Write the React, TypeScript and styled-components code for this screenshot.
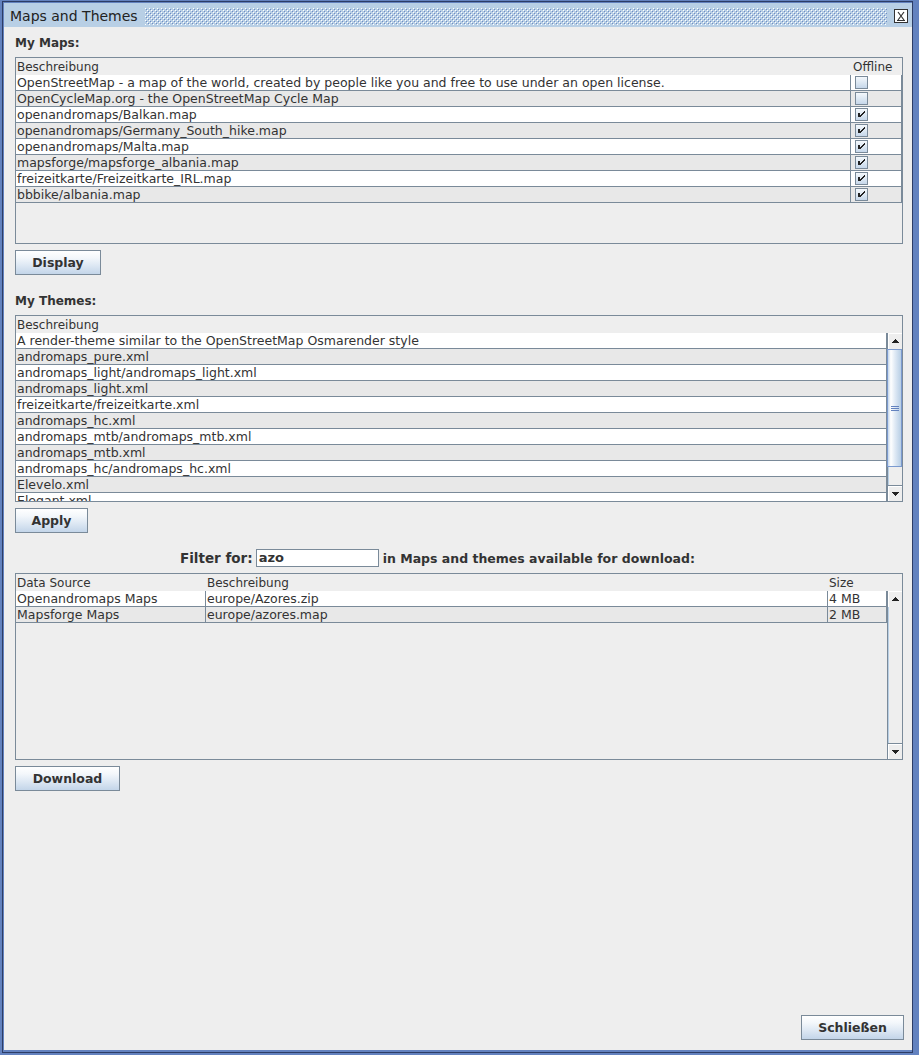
import React from 'react';
import styled, { createGlobalStyle } from 'styled-components';

const GlobalStyle = createGlobalStyle`
  html, body { margin: 0; padding: 0; background: #6382bf; }
  body { font-family: "DejaVu Sans", "Liberation Sans", sans-serif; }
  * { box-sizing: border-box; }
`;

const GRID = '#7a8a99';
const TEXT = '#333333';

const Frame = styled.div`
  width: 919px;
  height: 1055px;
  background: #6382bf;
  padding: 3px 7px 5px 4px;
  display: flex;
  flex-direction: column;
  box-shadow:
    inset 2px 0 0 #6382bf, inset 0 1px 0 #6382bf, inset -6px 0 0 #6382bf, inset 0 -2px 0 #6382bf,
    inset 3px 0 0 #2d3d66, inset 0 2px 0 #2d3d66, inset -7px 0 0 #2d3d66, inset 0 -3px 0 #2d3d66;
`;

const TitleBar = styled.div`
  flex: none;
  height: 24px;
  background: #b8cfe5;
  display: flex;
  align-items: center;
  padding: 2px 4px 0 6px;
  gap: 7px;
`;

const TitleText = styled.span`
  font-size: 14px;
  font-weight: normal;
  color: #222222;
  white-space: nowrap;
`;

const BumpsSvg = styled.svg`
  flex: 1;
  height: 17px;
  display: block;
`;

const CloseSvg = styled.svg`
  flex: none;
  width: 14px;
  height: 14px;
  display: block;
`;

const Content = styled.div`
  flex: 1;
  background: #eeeeee;
  display: flex;
  flex-direction: column;
  padding: 9px 9px 10px 11px;
  color: ${TEXT};
`;

const SectionLabel = styled.div<{ $top?: number }>`
  height: 15px;
  line-height: 15px;
  font-size: 12px;
  font-weight: bold;
  margin-top: ${(p) => p.$top ?? 0}px;
  margin-bottom: 6px;
  white-space: nowrap;
`;

const TableBox = styled.div`
  flex: none;
  height: 187px;
  border: 1px solid ${GRID};
  background: #eeeeee;
  display: flex;
  flex-direction: column;
  overflow: hidden;
`;

const HeaderRow = styled.div`
  flex: none;
  height: 17px;
  display: flex;
`;

const HeaderCell = styled.div<{ $w: number; $pad?: number }>`
  flex: none;
  width: ${(p) => p.$w}px;
  padding-left: ${(p) => p.$pad ?? 1}px;
  font-size: 12px;
  line-height: 18px;
  white-space: nowrap;
`;

const Body = styled.div`
  flex: 1;
  display: flex;
  min-height: 0;
`;

const Rows = styled.div`
  flex: 1;
  overflow: hidden;
`;

const Row = styled.div<{ $alt: boolean }>`
  display: flex;
  height: 16px;
  background: ${(p) => (p.$alt ? '#e8e8e8' : '#ffffff')};
  border-bottom: 1px solid ${GRID};
`;

const Cell = styled.div<{ $w: number }>`
  flex: none;
  width: ${(p) => p.$w}px;
  border-right: 1px solid ${GRID};
  padding-left: 1px;
  font-size: 12.5px;
  line-height: 15px;
  white-space: nowrap;
  overflow: hidden;
`;

const CheckCell = styled.div<{ $w: number }>`
  flex: none;
  width: ${(p) => p.$w}px;
  border-right: 1px solid ${GRID};
  padding: 1px 0 0 4px;
`;

const CheckBox = styled.span`
  display: block;
  width: 13px;
  height: 13px;
  border: 1px solid ${GRID};
  background: linear-gradient(to bottom, #f4f8fc 0%, #dde8f3 50%, #c6d7ea 100%);
  position: relative;
`;

const CheckSvg = styled.svg`
  position: absolute;
  left: -1px;
  top: -1px;
  width: 13px;
  height: 13px;
`;

const ScrollBar = styled.div`
  flex: none;
  width: 15px;
  display: flex;
  flex-direction: column;
  border-left: 1px solid ${GRID};
`;

const ArrowButton = styled.div<{ $down?: boolean }>`
  flex: none;
  height: 16px;
  background: #eeeeee;
  box-shadow: inset 1px 1px 0 #ffffff;
  border-top: ${(p) => (p.$down ? `1px solid ${GRID}` : 'none')};
  display: flex;
  align-items: center;
  justify-content: center;
`;

const Thumb = styled.div<{ $h: number }>`
  flex: none;
  height: ${(p) => p.$h}px;
  margin-left: -1px;
  border: 1px solid #7b9ad0;
  background: linear-gradient(to right, #c4d6ea 0%, #ffffff 22%, #e3ecf6 50%, #c9daec 80%, #b8cfe5 100%);
  display: flex;
  flex-direction: column;
  align-items: center;
  justify-content: center;
  gap: 1px;
`;

const Grip = styled.span`
  display: block;
  width: 8px;
  height: 1px;
  background: #6382bf;
`;

const Track = styled.div`
  flex: 1;
  background: #eeeeee;
  box-shadow: inset 1px 0 0 #b8cfe5;
`;

const Button = styled.button<{ $w: number; $right?: boolean }>`
  flex: none;
  width: ${(p) => p.$w}px;
  height: 25px;
  padding: 0;
  border: 1px solid ${GRID};
  background: linear-gradient(to bottom, #ffffff 0%, #f3f7fb 30%, #dfe9f4 60%, #c3d5e9 100%);
  font-family: "DejaVu Sans", sans-serif;
  font-size: 12.5px;
  font-weight: bold;
  color: ${TEXT};
  align-self: ${(p) => (p.$right ? 'flex-end' : 'flex-start')};
  margin-right: ${(p) => (p.$right ? -1 : 0)}px;
  margin-top: 6px;
`;

const FilterRow = styled.div`
  flex: none;
  height: 18px;
  margin-top: 16px;
  margin-bottom: 6px;
  padding-left: 165px;
  display: flex;
  align-items: center;
  white-space: nowrap;
`;

const FilterLabel = styled.span<{ $size: number }>`
  font-size: ${(p) => p.$size}px;
  font-weight: bold;
`;

const FilterInput = styled.div`
  flex: none;
  width: 123px;
  height: 18px;
  margin: 0 4px 0 3px;
  border: 1px solid ${GRID};
  background: #ffffff;
  font-size: 13px;
  font-weight: bold;
  line-height: 16px;
  padding-left: 2px;
`;

const Spacer = styled.div`
  flex: 1;
`;

const Arrow = ({ down }: { down?: boolean }) => (
  <svg width="8" height="4" viewBox="0 0 8 4" shapeRendering="crispEdges">
    {down ? <path d="M0 0 H8 L4 4 Z" fill="#222" /> : <path d="M0 4 H8 L4 0 Z" fill="#222" />}
  </svg>
);

const Check = () => (
  <CheckSvg viewBox="0 0 13 13" shapeRendering="crispEdges">
    <rect x="3" y="5" width="2" height="4" fill="#222" />
    <rect x="5" y="7" width="1" height="2" fill="#222" />
    <rect x="6" y="6" width="1" height="2" fill="#222" />
    <rect x="7" y="5" width="1" height="2" fill="#222" />
    <rect x="8" y="4" width="1" height="2" fill="#222" />
    <rect x="9" y="3" width="1" height="2" fill="#222" />
  </CheckSvg>
);

const maps: [string, boolean][] = [
  ['OpenStreetMap - a map of the world, created by people like you and free to use under an open license.', false],
  ['OpenCycleMap.org - the OpenStreetMap Cycle Map', false],
  ['openandromaps/Balkan.map', true],
  ['openandromaps/Germany_South_hike.map', true],
  ['openandromaps/Malta.map', true],
  ['mapsforge/mapsforge_albania.map', true],
  ['freizeitkarte/Freizeitkarte_IRL.map', true],
  ['bbbike/albania.map', true],
];

const themes = [
  'A render-theme similar to the OpenStreetMap Osmarender style',
  'andromaps_pure.xml',
  'andromaps_light/andromaps_light.xml',
  'andromaps_light.xml',
  'freizeitkarte/freizeitkarte.xml',
  'andromaps_hc.xml',
  'andromaps_mtb/andromaps_mtb.xml',
  'andromaps_mtb.xml',
  'andromaps_hc/andromaps_hc.xml',
  'Elevelo.xml',
  'Elegant.xml',
];

const downloads = [
  ['Openandromaps Maps', 'europe/Azores.zip', '4 MB'],
  ['Mapsforge Maps', 'europe/azores.map', '2 MB'],
];

export default function App() {
  return (
    <>
      <GlobalStyle />
      <Frame>
        <TitleBar>
          <TitleText>Maps and Themes</TitleText>
          <BumpsSvg>
            <defs>
              <pattern id="bumps" width="4" height="4" patternUnits="userSpaceOnUse">
                <rect x="0" y="0" width="1" height="1" fill="#ffffff" />
                <rect x="2" y="2" width="1" height="1" fill="#ffffff" />
                <rect x="1" y="1" width="1" height="1" fill="#6f8cc4" />
                <rect x="3" y="3" width="1" height="1" fill="#6f8cc4" />
              </pattern>
            </defs>
            <rect width="100%" height="100%" fill="url(#bumps)" />
          </BumpsSvg>
          <CloseSvg viewBox="0 0 14 14" shapeRendering="crispEdges">
            <rect x="0" y="0" width="14" height="14" fill="#ffffff" />
            <rect x="0.5" y="0.5" width="13" height="13" fill="none" stroke="#333" />
            <path d="M4 3 L10 11 M10 3 L4 11" stroke="#333" strokeWidth="1.2" shapeRendering="auto" />
            <rect x="3" y="11" width="8" height="1" fill="#333" />
          </CloseSvg>
        </TitleBar>
        <Content>
          <SectionLabel>My Maps:</SectionLabel>
          <TableBox>
            <HeaderRow>
              <HeaderCell $w={835}>Beschreibung</HeaderCell>
              <HeaderCell $w={51} $pad={2}>Offline</HeaderCell>
            </HeaderRow>
            <Body>
              <Rows>
                {maps.map(([name, off], i) => (
                  <Row key={name} $alt={i % 2 === 1}>
                    <Cell $w={835}>{name}</Cell>
                    <CheckCell $w={51}>
                      <CheckBox>{off && <Check />}</CheckBox>
                    </CheckCell>
                  </Row>
                ))}
              </Rows>
            </Body>
          </TableBox>
          <Button $w={86}>Display</Button>

          <SectionLabel $top={19}>My Themes:</SectionLabel>
          <TableBox>
            <HeaderRow>
              <HeaderCell $w={886}>Beschreibung</HeaderCell>
            </HeaderRow>
            <Body>
              <Rows>
                {themes.map((t, i) => (
                  <Row key={t} $alt={i % 2 === 1}>
                    <Cell $w={871}>{t}</Cell>
                  </Row>
                ))}
              </Rows>
              <ScrollBar>
                <ArrowButton>
                  <Arrow />
                </ArrowButton>
                <Thumb $h={118}>
                  <Grip />
                  <Grip />
                  <Grip />
                </Thumb>
                <Track />
                <ArrowButton $down>
                  <Arrow down />
                </ArrowButton>
              </ScrollBar>
            </Body>
          </TableBox>
          <Button $w={73}>Apply</Button>

          <FilterRow>
            <FilterLabel $size={13.5}>Filter for:</FilterLabel>
            <FilterInput>azo</FilterInput>
            <FilterLabel $size={12.5}>in Maps and themes available for download:</FilterLabel>
          </FilterRow>
          <TableBox>
            <HeaderRow>
              <HeaderCell $w={190}>Data Source</HeaderCell>
              <HeaderCell $w={622}>Beschreibung</HeaderCell>
              <HeaderCell $w={74}>Size</HeaderCell>
            </HeaderRow>
            <Body>
              <Rows>
                {downloads.map(([src, desc, size], i) => (
                  <Row key={desc} $alt={i % 2 === 1}>
                    <Cell $w={190}>{src}</Cell>
                    <Cell $w={622}>{desc}</Cell>
                    <Cell $w={59}>{size}</Cell>
                  </Row>
                ))}
              </Rows>
              <ScrollBar>
                <ArrowButton>
                  <Arrow />
                </ArrowButton>
                <Track />
                <ArrowButton $down>
                  <Arrow down />
                </ArrowButton>
              </ScrollBar>
            </Body>
          </TableBox>
          <Button $w={105}>Download</Button>
          <Spacer />
          <Button $w={103} $right>
            Schließen
          </Button>
        </Content>
      </Frame>
    </>
  );
}
